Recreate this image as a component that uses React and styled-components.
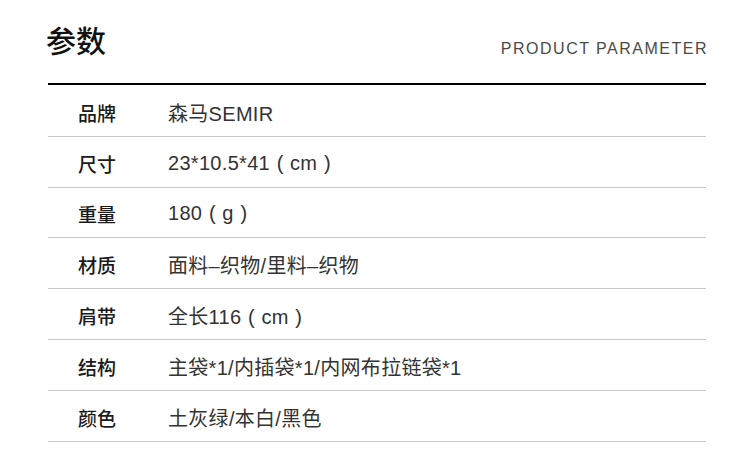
import React from 'react'
import styled, { createGlobalStyle } from 'styled-components'

const GlobalStyle = createGlobalStyle`
  html, body {
    margin: 0;
    padding: 0;
    background: #fff;
  }
  body {
    font-family: 'Liberation Sans', 'Noto Sans CJK SC', sans-serif;
  }
`

const Page = styled.section`
  width: 750px;
  height: 471px;
  box-sizing: border-box;
  padding: 0 44px 0 48px;
  overflow: hidden;
`

const Header = styled.header`
  display: flex;
  justify-content: space-between;
  align-items: flex-end;
  height: 85px;
  box-sizing: border-box;
  padding-bottom: 26px;
  border-bottom: 2px solid #000;
`

const Title = styled.h1`
  margin: 0 0 3px -2px;
  font-family: 'Noto Sans CJK SC', sans-serif;
  font-size: 30px;
  font-weight: 500;
  color: #111;
  line-height: 1;
`

const Subtitle = styled.span`
  font-family: 'Liberation Sans', sans-serif;
  font-size: 16px;
  font-weight: 300;
  color: #4a4a4a;
  letter-spacing: 1.5px;
  line-height: 1;
  margin-right: -2px;
`

const Table = styled.dl`
  margin: 0;
  padding-top: 1px;
`

const Row = styled.div`
  display: grid;
  grid-template-columns: 120px 1fr;
  align-items: center;
  height: 50.8px;
  box-sizing: border-box;
  padding-top: 3px;
  border-bottom: 1px solid #c8c8c8;
`

const Label = styled.dt`
  padding-left: 30px;
  font-family: 'Noto Sans CJK SC', sans-serif;
  font-size: 19px;
  font-weight: 500;
  color: #1a1a1a;
`

const Value = styled.dd`
  margin: 0;
  font-family: 'Liberation Sans', 'Noto Sans CJK SC', sans-serif;
  font-size: 20px;
  letter-spacing: 0.3px;
  color: #333;
`

const Paren = styled.span`
  display: inline-block;
  width: 1em;
  text-align: center;
  font-family: 'Liberation Sans', sans-serif;
  letter-spacing: 0;
`

const specs = [
  ['品牌', '森马SEMIR'],
  ['尺寸', '23*10.5*41（cm）'],
  ['重量', '180（g）'],
  ['材质', '面料–织物/里料–织物'],
  ['肩带', '全长116（cm）'],
  ['结构', '主袋*1/内插袋*1/内网布拉链袋*1'],
  ['颜色', '土灰绿/本白/黑色'],
]

// full-width brackets get their own em box so they keep the wide spacing
function renderValue(text) {
  return text.split(/([（）])/).map((part, i) => {
    if (part === '（') return <Paren key={i}>(</Paren>
    if (part === '）') return <Paren key={i}>)</Paren>
    return part
  })
}

function App() {
  return (
    <Page>
      <GlobalStyle />
      <Header>
        <Title>参数</Title>
        <Subtitle>PRODUCT PARAMETER</Subtitle>
      </Header>
      <Table>
        {specs.map(([label, value]) => (
          <Row key={label}>
            <Label>{label}</Label>
            <Value>{renderValue(value)}</Value>
          </Row>
        ))}
      </Table>
    </Page>
  )
}

export default App
